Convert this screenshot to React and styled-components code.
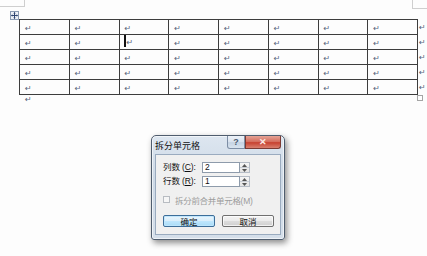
import React from 'react';
import styled, { createGlobalStyle } from 'styled-components';

const GlobalStyle = createGlobalStyle`
  html, body {
    margin: 0;
    padding: 0;
    background: #fdfdfd;
  }
  body {
    font-family: "Liberation Sans", "Noto Sans CJK SC", sans-serif;
  }
`;

const Page = styled.div`
  position: relative;
  width: 427px;
  height: 256px;
  overflow: hidden;
  box-sizing: border-box;
  padding: 19px 0 0 19px;
  background: #fdfdfd;
`;

const CornerMark = styled.div`
  position: absolute;
  top: 0;
  left: ${p => p.left}px;
  width: ${p => p.w}px;
  height: ${p => p.h}px;
  border-bottom: 1px solid #cfcfcf;
  ${p => (p.side === 'left' ? 'border-right: 1px solid #cfcfcf;' : 'border-left: 1px solid #cfcfcf;')}
`;

const MoveHandle = styled.div`
  position: absolute;
  left: 10px;
  top: 11px;
  width: 7px;
  height: 7px;
  border: 1px solid #8a9bb3;
  background: #eef2f8;
  display: flex;
  align-items: center;
  justify-content: center;
`;

const TableRow = styled.div`
  display: flex;
  align-items: flex-start;
`;

const Grid = styled.table`
  border-collapse: collapse;
  table-layout: fixed;
  width: 399px;
`;

const Cell = styled.td`
  height: 14px;
  padding: 0 0 0 5px;
  border: 1px solid #3d3d3d;
  vertical-align: middle;
  white-space: nowrap;
  line-height: 10px;
`;

const Mark = styled.span`
  font-family: "DejaVu Sans", sans-serif;
  font-size: 8px;
  line-height: 10px;
  color: #55637a;
`;

const Caret = styled.span`
  display: inline-block;
  width: 2px;
  height: 12px;
  background: #111;
  vertical-align: middle;
  margin: 0 1px 0 -1px;
`;

const EndMarks = styled.div`
  display: flex;
  flex-direction: column;
  padding-top: 1px;
  margin-left: 1px;
`;

const EndMark = styled.div`
  height: 15px;
  display: flex;
  align-items: center;
`;

const ResizeHandle = styled.div`
  position: absolute;
  left: 417px;
  top: 95px;
  width: 4px;
  height: 4px;
  border: 1px solid #a5a5a5;
  background: #fff;
`;

const AfterLine = styled.div`
  height: 10px;
  padding-left: 6px;
  display: flex;
  align-items: center;
`;

const Dialog = styled.div`
  width: 134px;
  box-sizing: border-box;
  margin: 30px 0 0 132px;
  border: 1px solid #4f5d6e;
  border-radius: 5px 5px 3px 3px;
  background: linear-gradient(#dde6f0, #cdd9e6 40%, #d5dfea);
  box-shadow: 2px 3px 6px rgba(0, 0, 0, 0.45), inset 0 0 0 1px rgba(255, 255, 255, 0.6);
  padding: 0 3px 4px 3px;
`;

const TitleBar = styled.div`
  height: 18px;
  display: flex;
  align-items: flex-start;
`;

const Title = styled.div`
  font-family: "Noto Sans CJK SC", sans-serif;
  font-size: 9px;
  line-height: 19px;
  color: #111;
  flex: 1;
`;

const CaptionButton = styled.div`
  width: ${p => p.w}px;
  height: 13px;
  box-sizing: border-box;
  border: 1px solid ${p => (p.close ? '#7b3a33' : '#7d8ea5')};
  border-top: none;
  border-radius: ${p => (p.close ? '0 0 3px 0' : '0 0 0 3px')};
  background: ${p =>
    p.close
      ? 'linear-gradient(#e6a396, #d36a5a 50%, #c7412f 55%, #d9806f)'
      : 'linear-gradient(#edf2f8, #d8e2ee 50%, #c5d3e3 55%, #d9e4ef)'};
  display: flex;
  align-items: center;
  justify-content: center;
  font-family: "Liberation Sans", sans-serif;
  font-size: 9px;
  font-weight: bold;
  color: ${p => (p.close ? '#fbe9e6' : '#4a5a70')};
`;

const Client = styled.div`
  border: 1px solid #9aabbf;
  background: #f0f0f0;
  padding: 7px 6px 7px 7px;
`;

const FieldRow = styled.div`
  display: flex;
  align-items: center;
  height: 11px;
  margin-bottom: 3px;
`;

const Label = styled.div`
  width: 39px;
  font-size: 8.5px;
  line-height: 11px;
  color: #111;
  white-space: nowrap;
  letter-spacing: -0.1px;
`;

const Key = styled.span`
  text-decoration: underline;
`;

const Input = styled.div`
  width: 38px;
  height: 11px;
  box-sizing: border-box;
  border: 1px solid #8e9bab;
  background: #fff;
  font-size: 8.5px;
  line-height: 9px;
  padding-left: 2px;
  color: #111;
`;

const Spinner = styled.div`
  width: 10px;
  height: 11px;
  box-sizing: border-box;
  border: 1px solid #b5bcc6;
  border-left: none;
  background: linear-gradient(#f6f6f6, #e4e4e4);
  display: flex;
  flex-direction: column;
`;

const SpinHalf = styled.div`
  flex: 1;
  display: flex;
  align-items: center;
  justify-content: center;
  & + & {
    border-top: 1px solid #c8cdd4;
  }
`;

const CheckRow = styled.div`
  display: flex;
  align-items: center;
  margin-top: 8px;
  height: 9px;
`;

const Box = styled.div`
  width: 7px;
  height: 7px;
  box-sizing: border-box;
  border: 1px solid #b8bcc2;
  background: #f6f6f6;
  margin-right: 5px;
`;

const CheckText = styled.div`
  font-size: 8.5px;
  color: #9c9c9c;
  white-space: nowrap;
  letter-spacing: -0.3px;
`;

const Buttons = styled.div`
  display: flex;
  gap: 7px;
  margin-top: 11px;
`;

const Button = styled.div`
  width: 53px;
  height: 12px;
  box-sizing: border-box;
  border: 1px solid ${p => (p.primary ? '#3d6e99' : '#707070')};
  border-radius: 2px;
  background: ${p =>
    p.primary
      ? 'linear-gradient(#eaf5fc, #d9eefb 50%, #bee6fd 52%, #a9dbf6)'
      : 'linear-gradient(#f3f3f3, #ebebeb 50%, #dddddd 52%, #cfcfcf)'};
  box-shadow: inset 0 0 0 1px ${p => (p.primary ? 'rgba(190,230,253,0.9)' : 'rgba(255,255,255,0.7)')};
  display: flex;
  align-items: center;
  justify-content: center;
  font-size: 8.5px;
  color: #111;
`;

const cols = Array.from({ length: 8 });
const rows = Array.from({ length: 5 });

const Arrow = ({ up }) => (
  <svg width="5" height="3" viewBox="0 0 5 3">
    <path d={up ? 'M0 3 L2.5 0 L5 3 Z' : 'M0 0 L2.5 3 L5 0 Z'} fill="#555" />
  </svg>
);

const Spin = () => (
  <Spinner>
    <SpinHalf><Arrow up /></SpinHalf>
    <SpinHalf><Arrow /></SpinHalf>
  </Spinner>
);

const App = () => {
  return (
    <>
      <GlobalStyle />
      <Page>
        <CornerMark side="left" left={0} w={24} h={6} />
        <CornerMark side="right" left={412} w={15} h={8} />
        <MoveHandle>
          <svg width="7" height="7" viewBox="0 0 7 7">
            <path d="M3.5 0.5 V6.5 M0.5 3.5 H6.5" stroke="#2d4470" strokeWidth="1" />
            <path d="M3.5 0 L2.3 1.4 H4.7 Z M3.5 7 L2.3 5.6 H4.7 Z M0 3.5 L1.4 2.3 V4.7 Z M7 3.5 L5.6 2.3 V4.7 Z" fill="#2d4470" />
          </svg>
        </MoveHandle>
        <TableRow>
          <Grid>
            <tbody>
              {rows.map((_, r) => (
                <tr key={r}>
                  {cols.map((__, c) => (
                    <Cell key={c}>
                      {r === 1 && c === 2 && <Caret />}
                      <Mark>↵</Mark>
                    </Cell>
                  ))}
                </tr>
              ))}
            </tbody>
          </Grid>
          <EndMarks>
            {rows.map((_, r) => (
              <EndMark key={r}><Mark>↵</Mark></EndMark>
            ))}
          </EndMarks>
        </TableRow>
        <ResizeHandle />
        <AfterLine><Mark>↵</Mark></AfterLine>
        <Dialog>
          <TitleBar>
            <Title>拆分单元格</Title>
            <CaptionButton w={18}>?</CaptionButton>
            <CaptionButton w={36} close>✕</CaptionButton>
          </TitleBar>
          <Client>
            <FieldRow>
              <Label>列数 (<Key>C</Key>):</Label>
              <Input>2</Input>
              <Spin />
            </FieldRow>
            <FieldRow>
              <Label>行数 (<Key>R</Key>):</Label>
              <Input>1</Input>
              <Spin />
            </FieldRow>
            <CheckRow>
              <Box />
              <CheckText>拆分前合并单元格(M)</CheckText>
            </CheckRow>
            <Buttons>
              <Button primary>确定</Button>
              <Button>取消</Button>
            </Buttons>
          </Client>
        </Dialog>
      </Page>
    </>
  );
};

export default App;
